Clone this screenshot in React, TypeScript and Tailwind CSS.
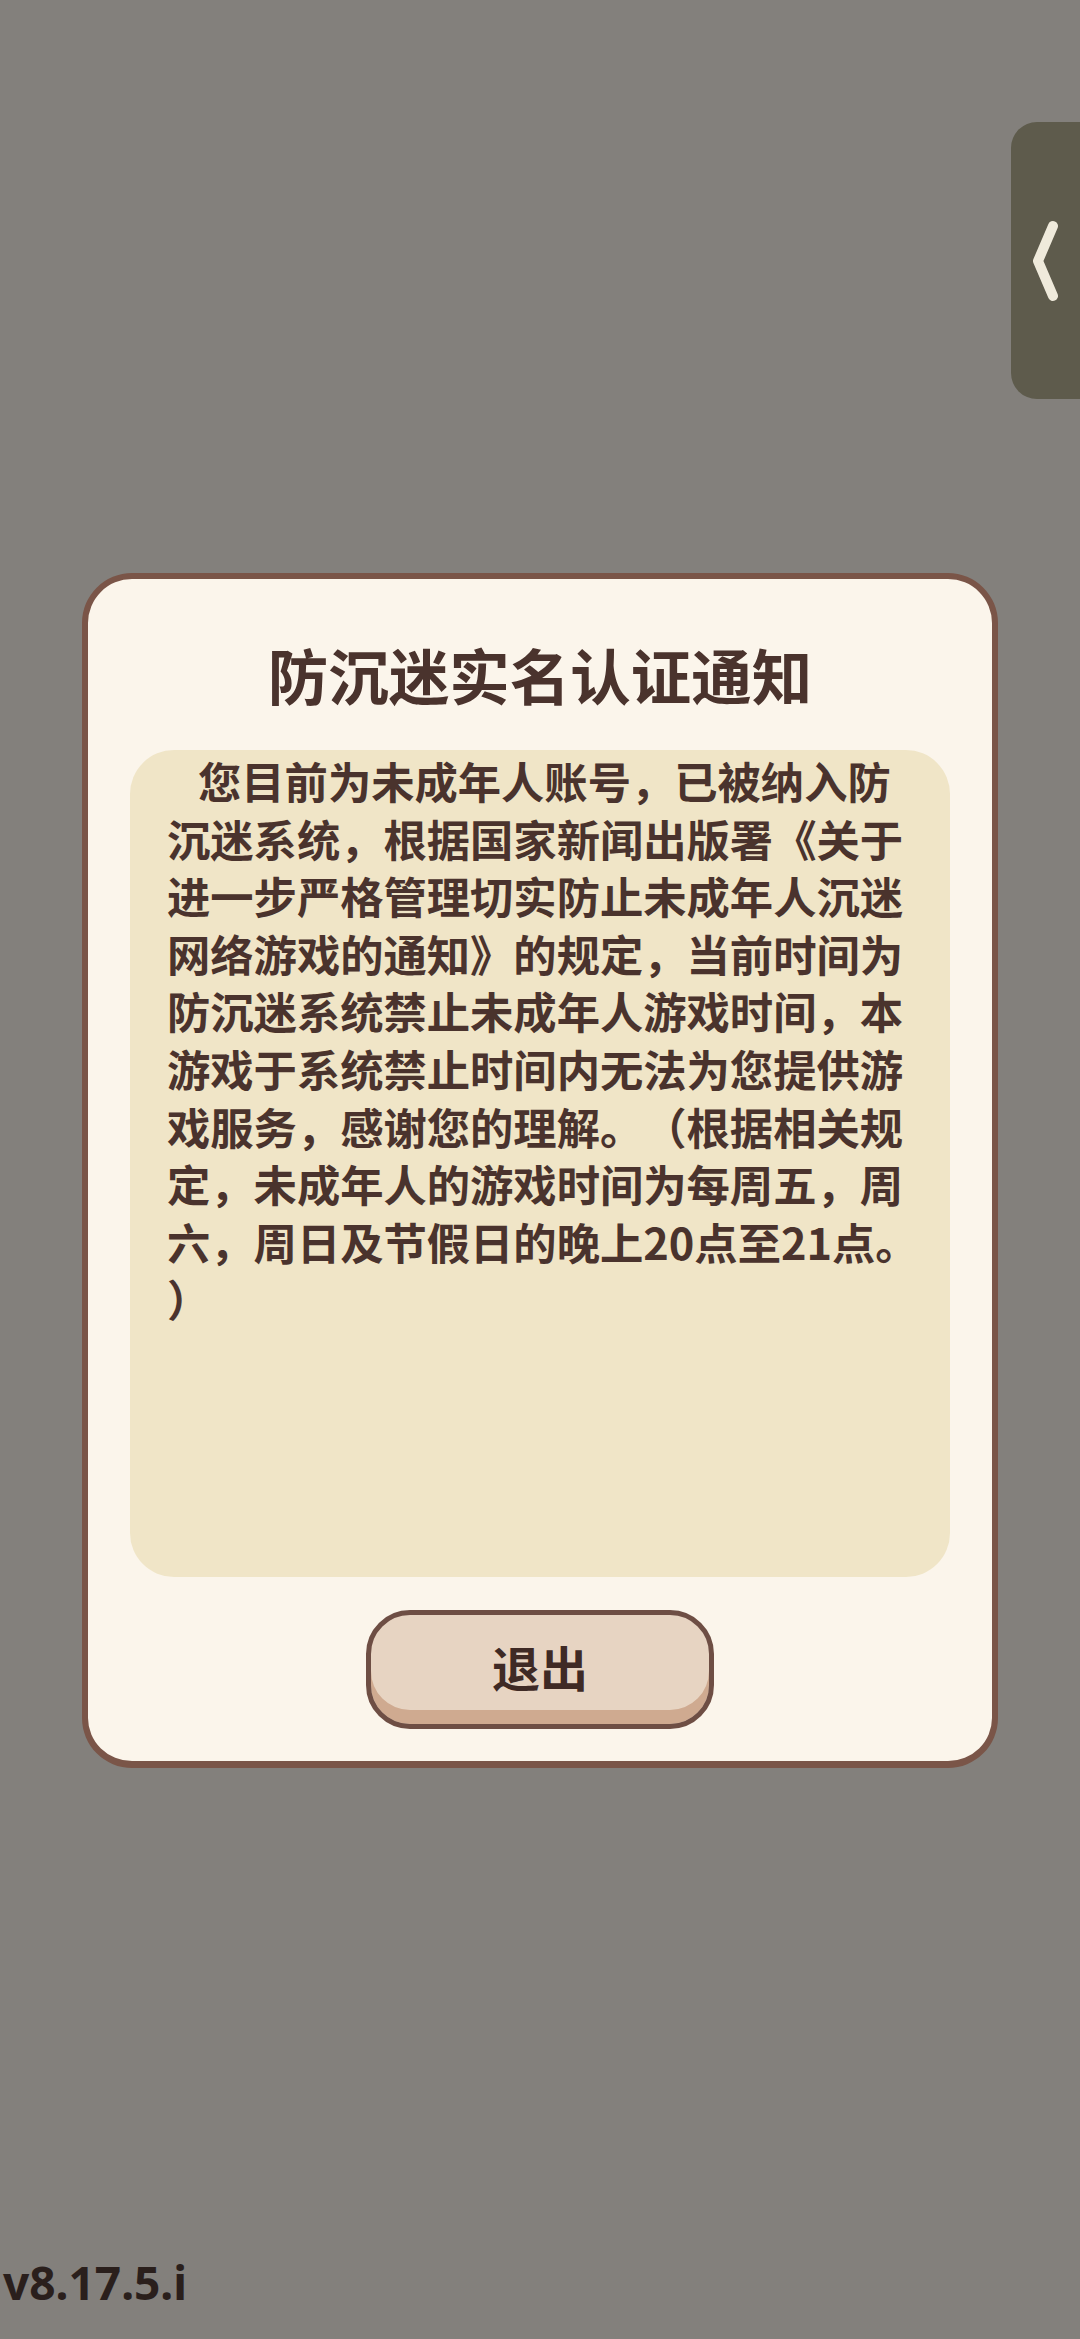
const CJK = "font-['Noto_Sans_CJK_SC','Noto_Sans',sans-serif]";

const noticeLines = [
  '您目前为未成年人账号，已被纳入防',
  '沉迷系统，根据国家新闻出版署《关于',
  '进一步严格管理切实防止未成年人沉迷',
  '网络游戏的通知》的规定，当前时间为',
  '防沉迷系统禁止未成年人游戏时间，本',
  '游戏于系统禁止时间内无法为您提供游',
  '戏服务，感谢您的理解。（根据相关规',
  '定，未成年人的游戏时间为每周五，周',
  '六，周日及节假日的晚上20点至21点。',
  '）',
];

const SideTab = () => (
  <div className="absolute right-0 top-[122px] flex h-[277px] w-[69px] items-center rounded-l-[26px] bg-[#5e5b4c] pl-[16px]">
    <svg width="34" height="90" viewBox="0 0 34 90" fill="none" aria-hidden="true">
      <path
        d="M26 10 L11 45 L26 80"
        stroke="#efeadb"
        strokeWidth="10"
        strokeLinecap="round"
        strokeLinejoin="round"
      />
    </svg>
  </div>
);

export default function App() {
  return (
    <div className={`relative flex h-[2339px] w-[1080px] flex-col overflow-hidden bg-[#83807c] ${CJK}`}>
      <SideTab />

      {/* 防沉迷弹窗 */}
      <div className="mx-[82px] mt-[573px] flex h-[1195px] flex-col items-center rounded-[50px] border-[6px] border-b-[7px] border-[#7a5548] bg-[#fbf5eb]">
        <h1 className="mt-[55px] h-[80px] text-[60.5px] font-bold leading-[80px] text-[#4a332d]">
          防沉迷实名认证通知
        </h1>

        <div className="ml-[42px] mt-[36px] h-[827px] w-[820px] self-start rounded-[44px] bg-[#f0e5c7] pl-[37px] pt-[2px] text-[43.3px] font-bold leading-[57.6px] text-[#4a332d] [text-spacing-trim:space-all]">
          {noticeLines.map((line, i) => (
            <div key={i} className={i === 0 ? 'whitespace-nowrap pl-[31px]' : 'whitespace-nowrap'}>
              {line}
            </div>
          ))}
        </div>

        <button
          type="button"
          className="mt-[33px] flex h-[119px] w-[348px] items-center justify-center rounded-[44px] border-[5px] border-[#6e4e44] bg-[#e7d4c2] pb-[8px] text-[48px] font-bold text-[#3f2a25] shadow-[inset_0_-14px_0_#cfaa90]"
        >
          退出
        </button>
      </div>

      <div className="mt-auto pb-[29px] pl-[3px] font-['Noto_Sans','Open_Sans',sans-serif] text-[46px] font-bold leading-[56px] text-[#2a1f1c]">
        v8.17.5.i
      </div>
    </div>
  );
}
